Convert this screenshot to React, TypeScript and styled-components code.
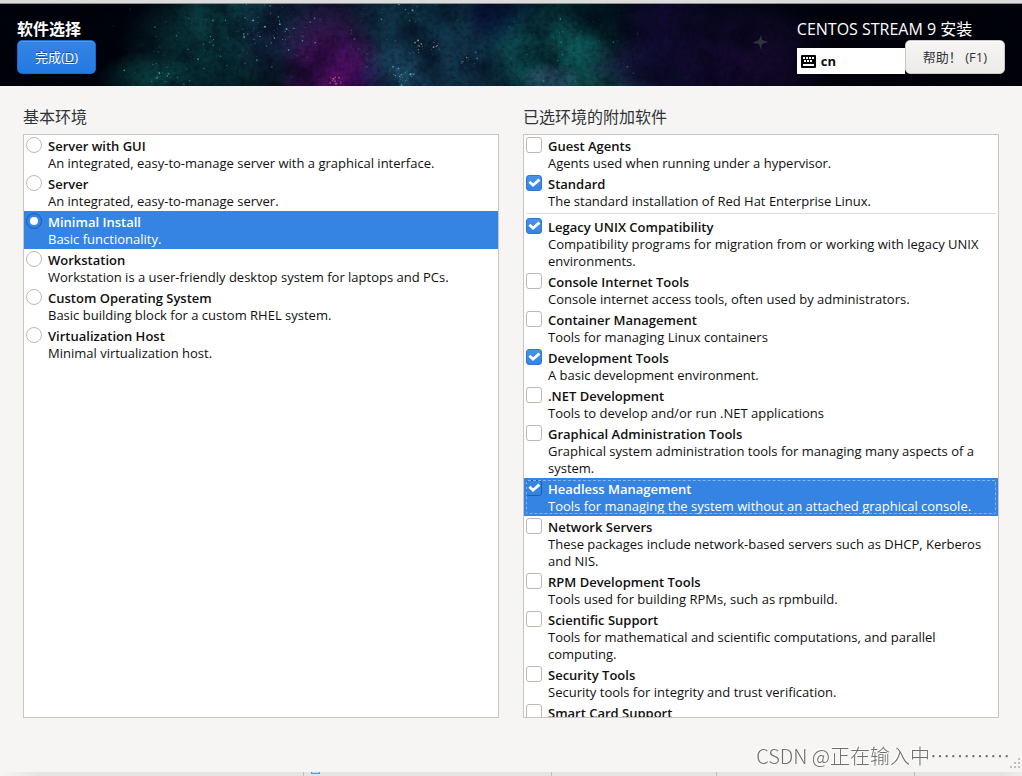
import React, { useState } from "react";
import styled, { createGlobalStyle, css } from "styled-components";

const GlobalStyle = createGlobalStyle`
  *, *::before, *::after { box-sizing: border-box; }
  body {
    margin: 0;
    background: #f6f5f4;
    color: #101010;
    font-family: "Open Sans", "Noto Sans CJK SC", sans-serif;
    font-size: 13px;
    line-height: 17px;
  }
  button, input { font: inherit; margin: 0; }
`;

const Page = styled.div`
  display: flex;
  flex-direction: column;
  height: 100vh;
  min-height: 480px;
`;

const WindowEdge = styled.div`
  flex: none;
  height: 4px;
  background: #dcdcdc;
  border-bottom: 1px solid #8f8f8f;
`;

const Header = styled.header`
  flex: none;
  position: relative;
  display: flex;
  justify-content: space-between;
  align-items: flex-start;
  height: 82px;
  padding: 14px 17px 12px;
  background: #02030c;
  color: #fff;
`;

const Sky = styled.svg`
  position: absolute;
  inset: 0;
  width: 100%;
  height: 100%;
`;

const HeaderGroup = styled.div`
  position: relative;
  display: flex;
  flex-direction: column;
  align-items: flex-start;
`;

const ScreenTitle = styled.h1`
  margin: 0;
  font-size: 16px;
  line-height: 22px;
  font-weight: 700;
`;

const ProductTitle = styled.p`
  margin: 0;
  font-size: 16px;
  line-height: 22px;
`;

const HeaderTools = styled.div`
  display: flex;
  align-items: flex-end;
`;

const Button = styled.button<{ $primary?: boolean }>`
  height: 34px;
  padding: 0 17px;
  border-radius: 5px;
  font-family: "Open Sans", "Noto Sans CJK SC", sans-serif;
  white-space: nowrap;
  ${({ $primary }) =>
    $primary
      ? css`
          color: #fff;
          border: 1px solid #1b6acb;
          background: linear-gradient(#3584e4, #2379e2);
          box-shadow: inset 0 1px #5397e8;
          text-shadow: 0 -1px rgba(0, 0, 0, 0.4);
        `
      : css`
          color: #2e3436;
          border: 1px solid #cdc7c2;
          background: linear-gradient(#f6f5f4, #edebe9);
          box-shadow: inset 0 1px #fff;
        `}
`;

const Layout = styled.div`
  display: flex;
  align-items: center;
  gap: 5px;
  width: 108px;
  height: 26px;
  padding: 0 4px;
  background: #fff;
  color: #101010;
  font-weight: 700;
`;

const Main = styled.main`
  flex: 1;
  min-height: 0;
  display: grid;
  grid-template-columns: 1fr 1fr;
  gap: 24px;
  padding: 20px 23px 54px;
`;

const Panel = styled.section`
  display: flex;
  flex-direction: column;
  min-width: 0;
  min-height: 0;
`;

const PanelTitle = styled.h2`
  margin: 0 0 6px;
  font-size: 16px;
  line-height: 22px;
  font-weight: 400;
  color: #2e3436;
`;

const List = styled.div`
  flex: 1;
  min-height: 0;
  overflow-y: auto;
  scrollbar-width: none;
  background: #fff;
  border: 1px solid #c9c5c1;
`;

const Row = styled.label<{ $selected?: boolean; $focused?: boolean }>`
  position: relative;
  display: flex;
  gap: 6px;
  padding: 2px 2px 1px;
  ${({ $selected }) => $selected && css`background: #3584e4; color: #fff;`}
  ${({ $focused }) =>
    $focused &&
    css`
      &::after {
        content: "";
        position: absolute;
        inset: 2px;
        border: 1px dashed #86b5ef;
        border-radius: 2px;
      }
    `}
`;

const RowText = styled.span`
  flex: 1;
  display: flex;
  flex-direction: column;
  padding-top: 1px;
`;

const RowName = styled.strong`
  font-weight: 600;
  color: inherit;
`;

const Mark = styled.span`
  flex: none;
  display: grid;
  width: 16px;
  height: 16px;
  & > * { grid-area: 1 / 1; }
`;

const Control = styled.input<{ $onBlue?: boolean }>`
  appearance: none;
  width: 16px;
  height: 16px;
  border: 1px solid #bfb8b1;
  border-radius: ${({ type }) => (type === "radio" ? "50%" : "3px")};
  background: #fff;
  &:checked {
    border-color: ${({ $onBlue }) => ($onBlue ? "#185fb4" : "#2a76d6")};
    background: ${({ $onBlue }) => ($onBlue ? "#3584e4" : "linear-gradient(#4a92e9, #3584e4)")};
  }
`;

const Glyph = styled.svg`
  width: 16px;
  height: 16px;
  pointer-events: none;
`;

const Separator = styled.hr`
  height: 1px;
  margin: 2px;
  border: 0;
  background: #dedede;
`;

const BottomEdge = styled.div`
  flex: none;
  display: grid;
  grid-template-columns: 303fr 248fr 165fr 198fr 108fr;
  height: 4px;
  background: linear-gradient(90deg, #f6f5f4, #e4e4e4 40px, #e4e4e4 calc(100% - 20px), #eee);
`;

const EdgeCell = styled.span`
  padding-left: 7px;
  & + & { border-left: 1px solid #bdbdbd; }
`;

const Tab = styled.i`
  display: block;
  width: 9px;
  height: 2px;
  background: #b8d8ee;
  border: 1px solid #5b9bd0;
  border-top: 0;
`;

const Watermark = styled.div`
  position: fixed;
  right: 12px;
  bottom: 5px;
  font-family: "Noto Sans CJK SC", sans-serif;
  font-size: 20px;
  line-height: 30px;
  font-weight: 300;
  color: #6e6e6e;
  text-shadow: -1px -1px #fff;
  white-space: nowrap;
  pointer-events: none;
`;

const Grip = styled.svg`
  position: fixed;
  right: 1px;
  bottom: 7px;
  width: 12px;
  height: 12px;
`;

type Item = { name: string; note: string; on?: boolean; gapAfter?: boolean };

const environments: Item[] = [
  { name: "Server with GUI", note: "An integrated, easy-to-manage server with a graphical interface." },
  { name: "Server", note: "An integrated, easy-to-manage server." },
  { name: "Minimal Install", note: "Basic functionality." },
  { name: "Workstation", note: "Workstation is a user-friendly desktop system for laptops and PCs." },
  { name: "Custom Operating System", note: "Basic building block for a custom RHEL system." },
  { name: "Virtualization Host", note: "Minimal virtualization host." },
];

const addons: Item[] = [
  { name: "Guest Agents", note: "Agents used when running under a hypervisor." },
  { name: "Standard", note: "The standard installation of Red Hat Enterprise Linux.", on: true, gapAfter: true },
  { name: "Legacy UNIX Compatibility", note: "Compatibility programs for migration from or working with legacy UNIX environments.", on: true },
  { name: "Console Internet Tools", note: "Console internet access tools, often used by administrators." },
  { name: "Container Management", note: "Tools for managing Linux containers" },
  { name: "Development Tools", note: "A basic development environment.", on: true },
  { name: ".NET Development", note: "Tools to develop and/or run .NET applications" },
  { name: "Graphical Administration Tools", note: "Graphical system administration tools for managing many aspects of a system." },
  { name: "Headless Management", note: "Tools for managing the system without an attached graphical console.", on: true },
  { name: "Network Servers", note: "These packages include network-based servers such as DHCP, Kerberos and NIS." },
  { name: "RPM Development Tools", note: "Tools used for building RPMs, such as rpmbuild." },
  { name: "Scientific Support", note: "Tools for mathematical and scientific computations, and parallel computing." },
  { name: "Security Tools", note: "Security tools for integrity and trust verification." },
  { name: "Smart Card Support", note: "" },
];

/* Colour clouds: centre, radii, colour, opacity */
const clouds: [number, number, number, number, string, number][] = [
  [225, 40, 110, 70, "#0c4248", 0.9],
  [155, 74, 60, 28, "#0c4646", 0.85],
  [235, 8, 60, 36, "#116060", 0.7],
  [285, 30, 60, 60, "#1b2248", 0.8],
  [400, 40, 140, 90, "#15344e", 0.95],
  [330, 50, 54, 60, "#3c1252", 1],
  [335, 74, 56, 50, "#4f0c62", 1],
  [372, 76, 24, 18, "#2c0850", 0.9],
  [402, 70, 44, 36, "#1f5672", 0.8],
  [430, 16, 80, 40, "#103c50", 0.8],
  [475, 60, 70, 50, "#153f58", 0.9],
  [505, 14, 44, 30, "#070d3c", 1],
  [565, 45, 90, 80, "#0d5658", 1],
  [550, 50, 60, 50, "#0f5c5c", 0.8],
  [610, 84, 90, 28, "#125050", 0.9],
  [550, 75, 32, 18, "#34506f", 0.8],
  [610, 12, 50, 30, "#02101c", 0.8],
  [635, 64, 50, 30, "#1c2344", 0.9],
  [672, 40, 60, 80, "#1b0a40", 1],
  [720, 50, 120, 80, "#0a0e2a", 0.9],
  [745, 60, 90, 60, "#1a0830", 0.8],
];

/* Star fields: centre, spread, count, colour */
const fields: [number, number, number, number, number, string][] = [
  [275, 25, 55, 32, 60, "#79c9cf"],
  [210, 40, 90, 40, 80, "#3fa0a0"],
  [160, 70, 40, 14, 35, "#4fb5ae"],
  [400, 70, 16, 14, 40, "#9fcbe0"],
  [422, 42, 20, 10, 24, "#e6dcc4"],
  [465, 54, 14, 7, 10, "#e2d6bb"],
  [335, 76, 10, 8, 24, "#f0b98a"],
  [400, 10, 40, 12, 24, "#55b8b4"],
  [340, 40, 320, 42, 110, "#3b8390"],
  [570, 45, 70, 40, 60, "#2c9a90"],
];

const random = (() => {
  let seed = 7;
  return () => {
    seed = (seed * 16807) % 2147483647;
    return seed / 2147483647;
  };
})();

const stars = fields.flatMap(([cx, cy, sx, sy, count, fill]) =>
  Array.from({ length: count }, () => ({
    x: cx + (random() + random() - 1) * sx,
    y: cy + (random() + random() - 1) * sy,
    r: 0.3 + random() * random() * 0.8,
    o: 0.25 + random() * 0.6,
    fill,
  }))
);

const NightSky = () => (
  <Sky viewBox="0 0 1022 82" preserveAspectRatio="xMidYMid slice" aria-hidden="true">
    <defs>
      {clouds.map(([, , , , color], i) => (
        <radialGradient key={i} id={`cloud${i}`}>
          <stop offset="0" stopColor={color} />
          <stop offset="0.5" stopColor={color} stopOpacity="0.65" />
          <stop offset="1" stopColor={color} stopOpacity="0" />
        </radialGradient>
      ))}
      <filter id="dust" x="0" y="0" width="100%" height="100%" colorInterpolationFilters="sRGB">
        <feTurbulence type="fractalNoise" baseFrequency="0.025" numOctaves="6" seed="12" />
        <feColorMatrix values="0 0 0 0 0  0 0 0 0 0.01  0 0 0 0 0.06  2.6 0 0 0 -1.05" />
      </filter>
      <filter id="grain" x="0" y="0" width="100%" height="100%" colorInterpolationFilters="sRGB">
        <feTurbulence type="fractalNoise" baseFrequency="0.22" numOctaves="3" seed="4" />
        <feColorMatrix values="0 0 0 0 0  0 0 0 0 0.02  0 0 0 0 0.05  1.8 0 0 0 -0.75" />
      </filter>
    </defs>
    <rect width="1022" height="82" fill="#01020a" />
    {clouds.map(([cx, cy, rx, ry, , opacity], i) => (
      <ellipse key={i} cx={cx} cy={cy} rx={rx} ry={ry} fill={`url(#cloud${i})`} opacity={opacity} />
    ))}
    <rect width="1022" height="82" filter="url(#dust)" opacity="0.55" />
    <rect width="1022" height="82" filter="url(#grain)" opacity="0.4" />
    {stars.map((s, i) => (
      <circle key={i} cx={s.x} cy={s.y} r={s.r} fill={s.fill} opacity={s.o} />
    ))}
    <path d="M761 31l1 5 6 2-6 2-1 6-2-6-7-1 7-3z" fill="#54604f" opacity="0.5" />
  </Sky>
);

const KeyboardIcon = () => (
  <svg width="15" height="13" viewBox="0 0 15 13" aria-hidden="true">
    <rect width="15" height="13" rx="1" fill="#000" />
    <path
      d="M2 2h2v2H2zM5 2h2v2H5zM8 2h2v2H8zM11 2h2v2h-2zM3 5h2v2H3zM6 5h2v2H6zM9 5h2v2H9zM2 9h11v2H2z"
      fill="#fff"
    />
  </svg>
);

export default function App() {
  const [environment, setEnvironment] = useState("Minimal Install");
  const [picked, setPicked] = useState(addons.filter((a) => a.on).map((a) => a.name));
  const [current, setCurrent] = useState("Headless Management");

  const toggle = (name: string) => {
    setCurrent(name);
    setPicked((p) => (p.includes(name) ? p.filter((n) => n !== name) : [...p, name]));
  };

  return (
    <Page>
      <GlobalStyle />
      <WindowEdge />
      <Header>
        <NightSky />
        <HeaderGroup>
          <ScreenTitle>软件选择</ScreenTitle>
          <Button type="button" $primary>
            完成(<u>D</u>)
          </Button>
        </HeaderGroup>
        <HeaderGroup>
          <ProductTitle>CENTOS STREAM 9 安装</ProductTitle>
          <HeaderTools>
            <Layout>
              <KeyboardIcon />
              cn
            </Layout>
            <Button type="button">帮助！ (F1)</Button>
          </HeaderTools>
        </HeaderGroup>
      </Header>
      <Main>
        <Panel>
          <PanelTitle>基本环境</PanelTitle>
          <List role="radiogroup" aria-label="基本环境">
            {environments.map(({ name, note }) => {
              const selected = name === environment;
              return (
                <Row key={name} $selected={selected}>
                  <Mark>
                    <Control
                      type="radio"
                      name="environment"
                      checked={selected}
                      $onBlue={selected}
                      onChange={() => setEnvironment(name)}
                    />
                    {selected && (
                      <Glyph viewBox="0 0 16 16">
                        <circle cx="8" cy="8" r="4" fill="#fff" />
                      </Glyph>
                    )}
                  </Mark>
                  <RowText>
                    <RowName>{name}</RowName>
                    <span>{note}</span>
                  </RowText>
                </Row>
              );
            })}
          </List>
        </Panel>
        <Panel>
          <PanelTitle>已选环境的附加软件</PanelTitle>
          <List role="group" aria-label="已选环境的附加软件">
            {addons.map(({ name, note, gapAfter }) => {
              const checked = picked.includes(name);
              const selected = name === current;
              return (
                <React.Fragment key={name}>
                  <Row $selected={selected} $focused={selected}>
                    <Mark>
                      <Control type="checkbox" checked={checked} $onBlue={selected} onChange={() => toggle(name)} />
                      {checked && (
                        <Glyph viewBox="0 0 16 16">
                          <path d="M3.4 6.8L7 10.2l6.4-5.6" fill="none" stroke="#fff" strokeWidth="2.8" />
                        </Glyph>
                      )}
                    </Mark>
                    <RowText>
                      <RowName>{name}</RowName>
                      {note && <span>{note}</span>}
                    </RowText>
                  </Row>
                  {gapAfter && <Separator />}
                </React.Fragment>
              );
            })}
          </List>
        </Panel>
      </Main>
      <BottomEdge>
        <EdgeCell />
        <EdgeCell>
          <Tab />
        </EdgeCell>
        <EdgeCell />
        <EdgeCell />
        <EdgeCell />
      </BottomEdge>
      <Watermark>CSDN @正在输入中…………</Watermark>
      <Grip viewBox="0 0 12 12" aria-hidden="true">
        <path d="M9 1h2v2H9zM5 5h2v2H5zM9 5h2v2H9zM1 9h2v2H1zM5 9h2v2H5zM9 9h2v2H9z" fill="#c4c0b4" />
      </Grip>
    </Page>
  );
}
